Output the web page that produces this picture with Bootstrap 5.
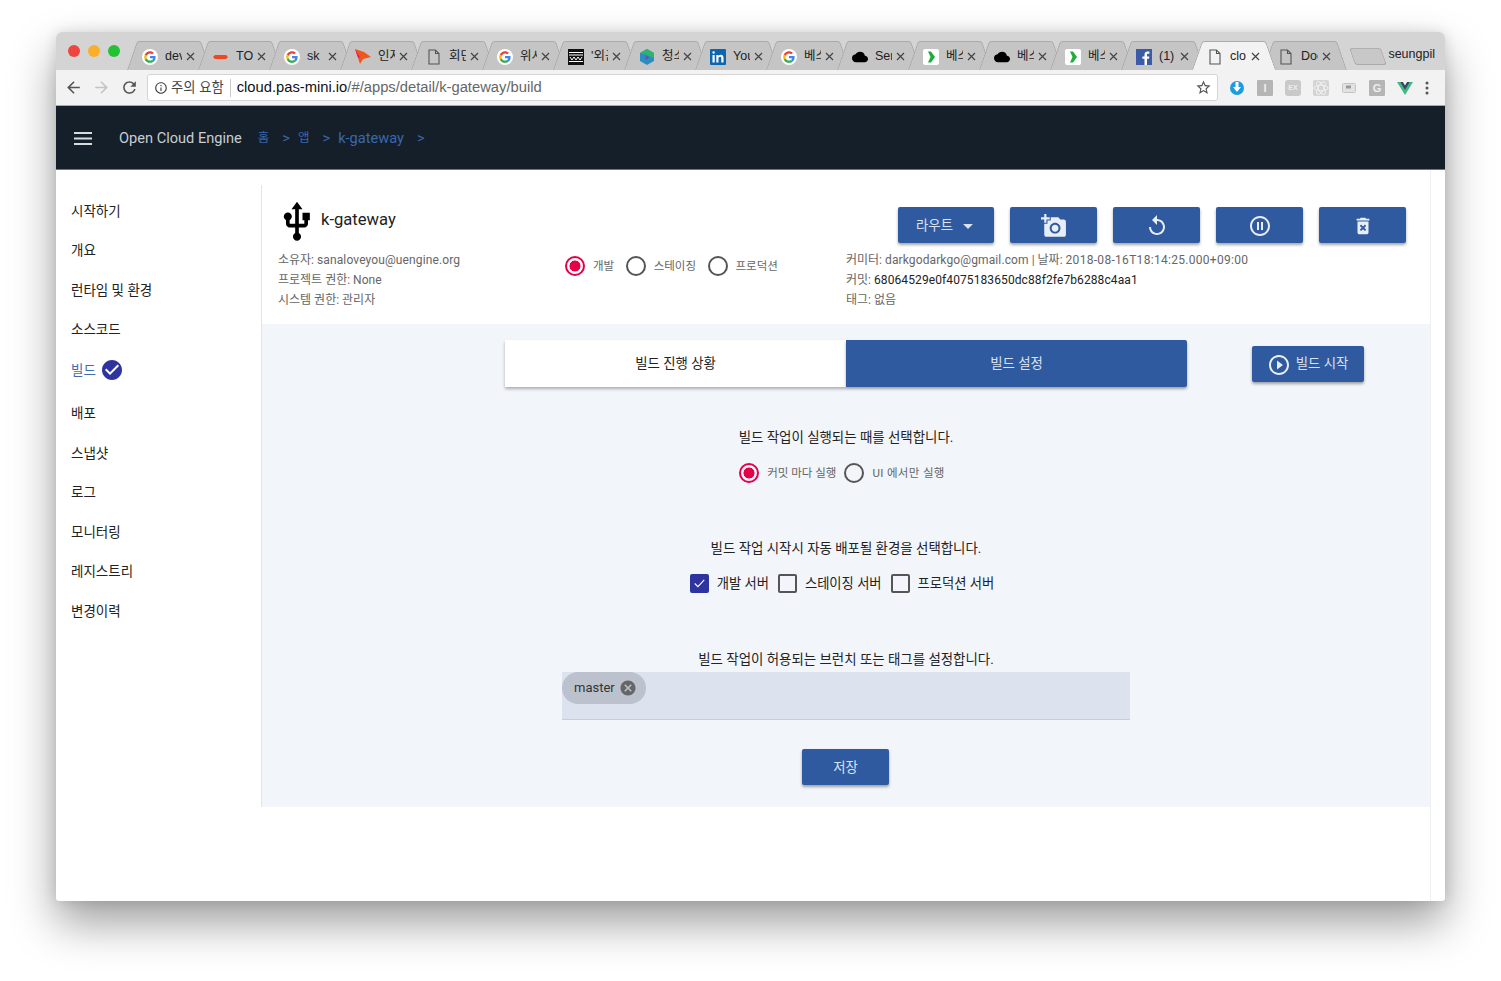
<!DOCTYPE html>
<html lang="ko">
<head>
<meta charset="utf-8">
<title>Open Cloud Engine</title>
<link href="https://cdn.jsdelivr.net/npm/bootstrap@5.3.0/dist/css/bootstrap.min.css" rel="stylesheet">
<style>
html,body{height:100%;}
body{margin:0;background:#fff;font-family:Roboto,"Noto Sans CJK KR",sans-serif;font-size:14px;color:#222;overflow:hidden;}
.oc-stage{padding:32px 56px 0;height:981px;}
.oc-win{width:1389px;height:869px;border-radius:6px 6px 3px 3px;background:#fff;box-shadow:0 22px 45px rgba(0,0,0,.38),0 0 14px rgba(0,0,0,.12);overflow:hidden;display:flex;flex-direction:column;}
.oc-strip{height:38px;background:#d4d4d4;flex:none;position:relative;}
.oc-dots{gap:8px;padding:13px 0 0 12px;width:71px;flex:none;}
.oc-dot{width:12px;height:12px;border-radius:50%;}
.oc-tabs{padding-top:9px;isolation:isolate;}
.oc-tab{width:84px;height:29px;margin-right:-13px;position:relative;display:flex;align-items:center;padding:2px 0 0 15px;font-family:"Liberation Sans","Noto Sans CJK KR",sans-serif;font-size:12.5px;color:#222;flex:none;}
.oc-tab::before,.oc-tab::after{content:"";position:absolute;top:0;bottom:0;width:50%;background:#c5c5c5;border-top:1px solid #aaa;z-index:-1;}
.oc-tab::before{left:5px;transform:skewX(-19deg);border-left:1px solid #a5a5a5;border-top-left-radius:3px;}
.oc-tab::after{right:5px;transform:skewX(19deg);border-right:1px solid #a5a5a5;border-top-right-radius:3px;}
.oc-tab.oc-on{z-index:2;}
.oc-tab.oc-on::before,.oc-tab.oc-on::after{background:#f2f2f2;}
.oc-fav{width:16px;height:16px;flex:none;display:block;}
.oc-tname{width:17px;margin-left:7px;overflow:hidden;white-space:nowrap;flex:none;}
.oc-x{margin-left:4px;width:9px;height:9px;flex:none;}
.oc-newtab{width:32px;height:17px;margin:7px 0 0 18px;flex:none;background:#c8c8c8;border:1px solid #aaa;border-top-color:#b0b0b0;border-radius:3px;transform:skewX(19deg);}
.oc-user{position:absolute;right:10px;top:13px;font-family:"Liberation Sans",sans-serif;font-size:12.5px;color:#222;}
.oc-bar{height:36px;background:#f2f2f2;border-bottom:1px solid #a8a8a8;flex:none;padding:0 0 0 8px;}
.oc-ic{width:19px;height:19px;flex:none;}
.oc-fwd{margin:0 9px;}
.oc-omni{width:1071px;height:27px;margin-left:8px;background:#fff;border:1px solid #d5d5d5;border-radius:3px;padding:0 5px 0 6px;flex:none;font-family:"Liberation Sans","Noto Sans CJK KR",sans-serif;}
.oc-warn{font-size:13.3px;color:#444;margin-left:3px;padding-right:6px;border-right:1px solid #ccc;line-height:18px;white-space:nowrap;}
.oc-url{font-size:14.75px;color:#666;margin-left:6px;white-space:nowrap;}
.oc-url b{font-weight:400;color:#111;}
.oc-exts{gap:12px;margin-left:11px;}
.oc-ext{width:16px;height:16px;flex:none;background:#b5b5b5;color:#eee;font:700 11px/16px "Liberation Sans",sans-serif;text-align:center;border-radius:1px;}
.oc-ext.oc-soft{background:#c9c9c9;border-radius:3px;font-size:7px;}
.oc-top{height:64px;background:#141f29;flex:none;padding:2px 0 0 18px;border-bottom:1px solid #6b7783;}
.oc-brand{margin-left:27px;color:#c8cdd2;font-size:14.6px;white-space:nowrap;}
.oc-crumbs{margin-left:16px;color:#3a67ad;font-size:14.6px;white-space:nowrap;align-items:center;}
.oc-crumbs .oc-ci{margin-right:13px;}
.oc-crumbs .oc-ko{font-size:12.5px;}
.oc-crumbs .oc-sep{margin-right:8px;}
.oc-main{flex:1;min-height:0;display:flex;}
.oc-side{width:205px;flex:none;padding:21px 0 0 15px;color:#222;}
.oc-side a{display:flex;align-items:center;height:39.6px;color:#222;text-decoration:none;font-size:13.5px;}
.oc-side a.oc-act{color:#3f6cb0;height:44px;padding-bottom:2px;}
.oc-cont{width:1169px;flex:none;margin-top:15px;}
.oc-panel{border-left:1px solid #e2e4e8;height:622px;display:flex;flex-direction:column;}
.oc-head{height:139px;background:#fff;flex:none;}
.oc-headtop{height:65px;padding:0 24px 0 16px;}
.oc-idn{height:70px;margin-left:-3px;}
.oc-title{font-size:16.6px;color:#222;margin-left:2px;}
.oc-usb{margin-top:3px;}
.oc-btn{--bs-btn-padding-x:0;--bs-btn-padding-y:0;height:36px;width:87px;background:#305a9f;border:0;border-radius:2px;color:#d8e2f2;font-size:13.4px;box-shadow:0 2px 3px rgba(0,0,0,.35);display:flex;align-items:center;justify-content:center;padding-top:2px;}
.oc-btn:hover{background:#305a9f;color:#d8e2f2;}
.oc-route{width:96px;gap:10px;padding-right:3px;}
.oc-start{width:112px;gap:5px;margin-right:2px;}
.oc-save{margin:29px 1px 0 0;}
.oc-btns{padding-top:22px;}
.oc-info{padding-left:16px;}
.oc-meta{font-size:12px;line-height:20px;color:#666;white-space:nowrap;}
.oc-meta b{font-weight:400;color:#222;letter-spacing:.1px;}
.oc-lat{letter-spacing:.12px;}
.oc-lat2{letter-spacing:.3px;}
.oc-c1{width:287px;flex:none;}
.oc-c2{width:281px;flex:none;padding-top:6px;}
.form-check-input.oc-radio{width:20px;height:20px;margin:0;flex:none;background:transparent;border:2px solid #555;border-radius:50%;box-shadow:none;}
.form-check-input.oc-radio:checked{border-color:#e5004a;background-image:radial-gradient(circle,#e5004a 0,#e5004a 5.2px,transparent 5.8px);background-color:transparent;}
.form-check-input.oc-rgap{margin-left:11.5px;}
.form-check-input.oc-rgap2{margin-left:8px;}
.oc-rl{font-size:11.5px;color:#666;white-space:nowrap;line-height:20px;margin-left:8px;}
.oc-rls{letter-spacing:.35px;}
.oc-body{flex:1;background:#f2f5fa;}
.oc-tabrow{padding-top:16px;}
.oc-seg{width:341px;height:47px;display:flex;align-items:center;justify-content:center;font-size:13.4px;padding-top:2px;}
.oc-seg1{background:#fff;color:#222;box-shadow:0 2px 3px rgba(0,0,0,.3);}
.oc-seg2{background:#305a9f;color:#d8e2f2;box-shadow:0 2px 3px rgba(0,0,0,.35);border-radius:0 2px 2px 0;}
.oc-side-b{flex:1;}
.oc-lab{font-size:13.45px;color:#222;line-height:20px;white-space:nowrap;}
.oc-l1{margin-top:41px;}
.oc-r1{margin-top:15px;padding-right:8px;}
.oc-l2{margin-top:56px;}
.oc-r2{margin-top:15px;padding-right:8px;}
.oc-l3{margin-top:56px;margin-bottom:2px;}
.form-check-input.oc-chk{width:19px;height:19px;margin:0;flex:none;background-color:transparent;border:2px solid #555;border-radius:2px;box-shadow:none;}
.form-check-input.oc-chk:checked{background-color:#2e349f;border-color:#2e349f;background-image:url("data:image/svg+xml,%3Csvg xmlns='http://www.w3.org/2000/svg' viewBox='0 0 19 19'%3E%3Cpath fill='none' stroke='%23fff' stroke-width='1.400' d='M3.500 9.500l4 4 8-8.500'/%3E%3C/svg%3E");background-size:100% 100%;}
.form-check-input.oc-cgap{margin-left:9px;}
.oc-cl{font-size:13.3px;color:#222;white-space:nowrap;margin-left:8px;}
.oc-input{width:568px;height:48px;background:#dce3ef;border-bottom:1px solid #c5ccdc;}
.oc-chip{height:32px;width:84px;border-radius:16px;background:#bcc2cd;padding-left:12px;font-size:13px;color:#333;}
.oc-chipx{margin-right:9px;}
.oc-bar-r{width:15px;flex:none;border-left:1px solid #efefef;}
</style>
</head>
<body>
<svg width="0" height="0" class="d-none" aria-hidden="true">
  <symbol id="g" viewBox="0 0 48 48"><circle cx="24" cy="24" r="24" fill="#fff"/><g transform="translate(6.500 6.500) scale(.73)"><path fill="#EA4335" d="M24 9.500c3.500 0 6.700 1.200 9.200 3.600l6.900-6.900C35.900 2.400 30.500 0 24 0 14.600 0 6.500 5.400 2.600 13.200l8 6.200C12.400 13.700 17.700 9.500 24 9.500z"/><path fill="#4285F4" d="M47 24.500c0-1.600-.1-3.100-.4-4.500H24v9h12.900c-.6 3-2.200 5.500-4.700 7.200l7.700 6C44.400 37.900 47 31.800 47 24.500z"/><path fill="#FBBC05" d="M10.500 28.600c-.5-1.400-.8-3-.8-4.600s.3-3.200.8-4.600l-8-6.200C.9 16.500 0 20.100 0 24s.9 7.500 2.600 10.800l7.900-6.200z"/><path fill="#34A853" d="M24 48c6.500 0 11.900-2.100 15.900-5.800l-7.700-6c-2.200 1.400-4.900 2.300-8.200 2.300-6.300 0-11.600-4.200-13.500-9.900l-8 6.200C6.500 42.600 14.600 48 24 48z"/></g></symbol>
  <symbol id="doc" viewBox="0 0 16 16"><path fill="none" stroke="#555" stroke-width="1.100" d="M3 1h6.500L13 4.500V15H3zM9.500 1v3.500H13"/></symbol>
  <symbol id="cloud" viewBox="0 0 24 24"><path fill="#000" d="M19.350 10.040A7.490 7.490 0 0 0 12 4C9.110 4 6.600 5.640 5.350 8.040A5.994 5.994 0 0 0 0 14c0 3.310 2.690 6 6 6h13c2.760 0 5-2.240 5-5 0-2.640-2.050-4.780-4.650-4.960z"/></symbol>
  <symbol id="ch" viewBox="0 0 16 16"><rect width="16" height="16" rx="2" fill="#fff"/><path fill="#1fae3c" d="M5 2.500h3l4 5.500-4 5.500H5l2.500-5.500z"/></symbol>
  <symbol id="xx" viewBox="0 0 9 9"><path stroke="#444" stroke-width="1.200" d="M1 1l7 7M8 1L1 8"/></symbol>
</svg>
<div class="oc-stage">
<div class="oc-win">
  <div class="oc-strip d-flex">
    <div class="oc-dots d-flex"><span class="oc-dot" style="background:#f0443e"></span><span class="oc-dot" style="background:#fbae27"></span><span class="oc-dot" style="background:#25c135"></span></div>
    <div class="oc-tabs d-flex">
      <div class="oc-tab"><svg class="oc-fav"><use href="#g"/></svg><span class="oc-tname">dev</span><svg class="oc-x"><use href="#xx"/></svg></div>
      <div class="oc-tab"><svg class="oc-fav" viewBox="0 0 16 16"><path fill="#f0451e" d="M2 6h11l2 2-2 2H2L0 8z"/></svg><span class="oc-tname">TO</span><svg class="oc-x"><use href="#xx"/></svg></div>
      <div class="oc-tab"><svg class="oc-fav"><use href="#g"/></svg><span class="oc-tname">sk</span><svg class="oc-x"><use href="#xx"/></svg></div>
      <div class="oc-tab"><svg class="oc-fav" viewBox="0 0 16 16"><path fill="#f0561e" d="M0 0l9 3 7 5-8 2-3 5-2-6z"/><path fill="#e6007e" d="M0 0l5 9-2-1z"/></svg><span class="oc-tname">인지</span><svg class="oc-x"><use href="#xx"/></svg></div>
      <div class="oc-tab"><svg class="oc-fav"><use href="#doc"/></svg><span class="oc-tname">회단</span><svg class="oc-x"><use href="#xx"/></svg></div>
      <div class="oc-tab"><svg class="oc-fav"><use href="#g"/></svg><span class="oc-tname">위시</span><svg class="oc-x"><use href="#xx"/></svg></div>
      <div class="oc-tab"><svg class="oc-fav" viewBox="0 0 16 16"><rect width="16" height="16" fill="#111"/><path stroke="#fff" stroke-width="1" fill="none" d="M1 3.500h14M1 6h14M2 8l2 3 2-3 2 3 2-3 2 3 2-3M1 12.500h14"/></svg><span class="oc-tname">'외근</span><svg class="oc-x"><use href="#xx"/></svg></div>
      <div class="oc-tab"><svg class="oc-fav" viewBox="0 0 16 16"><path fill="#2a8fc0" d="M8 0l7 4v8l-7 4-7-4V4z"/><path fill="#2eb56b" d="M8 0l7 4v5L8 6 1 4z"/><path fill="#6a4fb0" d="M6.500 6l4 2.500-4 2.500z"/></svg><span class="oc-tname">청소</span><svg class="oc-x"><use href="#xx"/></svg></div>
      <div class="oc-tab"><svg class="oc-fav" viewBox="0 0 16 16"><rect width="16" height="16" rx="1" fill="#0a66b0"/><path fill="#fff" d="M2.500 6h2.200v7.500H2.500zM2.400 3.500a1.200 1.200 0 1 1 2.400 0 1.200 1.200 0 0 1-2.400 0zM6.300 6h2.100v1c.5-.8 1.300-1.200 2.300-1.200 2 0 2.800 1.200 2.800 3.200v4.500h-2.200V9.500c0-1-.3-1.700-1.200-1.700-1 0-1.600.7-1.600 1.800v3.900H6.300z"/></svg><span class="oc-tname">You</span><svg class="oc-x"><use href="#xx"/></svg></div>
      <div class="oc-tab"><svg class="oc-fav"><use href="#g"/></svg><span class="oc-tname">베스</span><svg class="oc-x"><use href="#xx"/></svg></div>
      <div class="oc-tab"><svg class="oc-fav"><use href="#cloud"/></svg><span class="oc-tname">Ser</span><svg class="oc-x"><use href="#xx"/></svg></div>
      <div class="oc-tab"><svg class="oc-fav"><use href="#ch"/></svg><span class="oc-tname">베스</span><svg class="oc-x"><use href="#xx"/></svg></div>
      <div class="oc-tab"><svg class="oc-fav"><use href="#cloud"/></svg><span class="oc-tname">베스</span><svg class="oc-x"><use href="#xx"/></svg></div>
      <div class="oc-tab"><svg class="oc-fav"><use href="#ch"/></svg><span class="oc-tname">베스</span><svg class="oc-x"><use href="#xx"/></svg></div>
      <div class="oc-tab"><svg class="oc-fav" viewBox="0 0 16 16"><rect width="16" height="16" fill="#3b5aa8"/><path fill="#fff" d="M11 16V9.800h2l.3-2.400H11V5.900c0-.7.2-1.200 1.200-1.200h1.200V2.600c-.2 0-1-.1-1.800-.1-1.900 0-3.100 1.100-3.100 3.200v1.700H6.400v2.400h2.100V16z"/></svg><span class="oc-tname">(1)</span><svg class="oc-x"><use href="#xx"/></svg></div>
      <div class="oc-tab oc-on"><svg class="oc-fav"><use href="#doc"/></svg><span class="oc-tname">clo</span><svg class="oc-x"><use href="#xx"/></svg></div>
      <div class="oc-tab"><svg class="oc-fav"><use href="#doc"/></svg><span class="oc-tname">Doc</span><svg class="oc-x"><use href="#xx"/></svg></div>
      <div class="oc-newtab"></div>
    </div>
    <div class="oc-user">seungpil</div>
  </div>
  <div class="oc-bar d-flex align-items-center">
    <svg class="oc-ic" viewBox="0 0 24 24"><path fill="#555" d="M20 11H7.830l5.590-5.590L12 4l-8 8 8 8 1.410-1.410L7.830 13H20v-2z"/></svg>
    <svg class="oc-ic oc-fwd" viewBox="0 0 24 24"><path fill="#c4c4c4" d="M12 4l-1.410 1.410L16.170 11H4v2h12.170l-5.580 5.590L12 20l8-8z"/></svg>
    <svg class="oc-ic" viewBox="0 0 24 24"><path fill="#555" d="M17.650 6.350A7.958 7.958 0 0 0 12 4c-4.420 0-7.990 3.580-7.990 8s3.570 8 7.990 8c3.730 0 6.840-2.550 7.730-6h-2.080A5.990 5.990 0 0 1 12 18c-3.310 0-6-2.690-6-6s2.690-6 6-6c1.660 0 3.140.69 4.220 1.780L13 11h7V4l-2.350 2.350z"/></svg>
    <div class="oc-omni d-flex align-items-center">
      <svg width="14" height="14" viewBox="0 0 24 24"><path fill="#444" d="M11 17h2v-6h-2v6zm1-15C6.480 2 2 6.480 2 12s4.480 10 10 10 10-4.480 10-10S17.520 2 12 2zm0 18c-4.410 0-8-3.590-8-8s3.590-8 8-8 8 3.590 8 8-3.590 8-8 8zm-1-11h2V7h-2v2z"/></svg>
      <span class="oc-warn">주의 요함</span>
      <span class="oc-url"><b>cloud.pas-mini.io</b>/#/apps/detail/k-gateway/build</span>
      <svg class="ms-auto" width="17" height="17" viewBox="0 0 24 24"><path fill="#555" d="M22 9.240l-7.190-.62L12 2 9.190 8.630 2 9.240l5.460 4.730L5.820 21 12 17.270 18.180 21l-1.630-7.030L22 9.240zM12 15.400l-3.760 2.270 1-4.280-3.320-2.880 4.380-.38L12 6.100l1.710 4.040 4.380.38-3.320 2.880 1 4.280L12 15.400z"/></svg>
    </div>
    <div class="oc-exts d-flex align-items-center">
      <svg width="16" height="16" viewBox="0 0 16 16"><circle cx="8" cy="8" r="7" fill="#1d9be0"/><path fill="#fff" d="M6.500 2h3v5h2.500L8 12 4 7h2.500z"/></svg>
      <span class="oc-ext">I</span>
      <span class="oc-ext oc-soft">EX</span>
      <svg width="16" height="16" viewBox="0 0 16 16"><rect width="16" height="16" rx="2" fill="#d4d4d4"/><g fill="none" stroke="#f2f2f2" stroke-width=".9"><ellipse cx="8" cy="8" rx="7" ry="2.800"/><ellipse cx="8" cy="8" rx="7" ry="2.800" transform="rotate(60 8 8)"/><ellipse cx="8" cy="8" rx="7" ry="2.800" transform="rotate(120 8 8)"/></g></svg>
      <svg width="16" height="16" viewBox="0 0 16 16"><rect x="1.500" y="3.500" width="13" height="9" rx="1" fill="#e2e2e2" stroke="#c4c4c4"/><rect x="5" y="5.500" width="5" height="3" fill="#999"/></svg>
      <span class="oc-ext">G</span>
      <svg width="16" height="16" viewBox="0 0 16 16"><path fill="#41b883" d="M0 2h3.500L8 9.500 12.500 2H16L8 15z"/><path fill="#34495e" d="M3.200 2h2.700L8 5.500 10.100 2h2.700L8 10z"/></svg>
      <svg width="4" height="14" viewBox="0 0 4 14"><circle cx="2" cy="2" r="1.500" fill="#555"/><circle cx="2" cy="7" r="1.500" fill="#555"/><circle cx="2" cy="12" r="1.500" fill="#555"/></svg>
    </div>
  </div>
  <div class="oc-top d-flex align-items-center">
    <svg width="18" height="13" viewBox="0 0 18 13"><path fill="#d8dbde" d="M0 0h18v2H0zM0 5.500h18v2H0zM0 11h18v2H0z"/></svg>
    <span class="oc-brand">Open Cloud Engine</span>
    <div class="oc-crumbs d-flex"><span class="oc-ci oc-ko">홈</span><span class="oc-sep">&gt;</span><span class="oc-ci oc-ko">앱</span><span class="oc-sep">&gt;</span><span class="oc-ci">k-gateway</span><span>&gt;</span></div>
  </div>
  <div class="oc-main">
    <nav class="oc-side">
      <a href="#">시작하기</a><a href="#">개요</a><a href="#">런타임 및 환경</a><a href="#">소스코드</a>
      <a href="#" class="oc-act">빌드<svg class="ms-1" width="24" height="24" viewBox="0 0 24 24"><circle cx="12" cy="12" r="6" fill="#fff"/><path fill="#2e349f" d="M12 2C6.480 2 2 6.480 2 12s4.480 10 10 10 10-4.480 10-10S17.520 2 12 2zm-2 15l-5-5 1.410-1.410L10 14.170l7.590-7.590L19 8l-9 9z"/></svg></a>
      <a href="#">배포</a><a href="#">스냅샷</a><a href="#">로그</a><a href="#">모니터링</a><a href="#">레지스트리</a><a href="#">변경이력</a>
    </nav>
    <div class="oc-cont">
      <div class="oc-panel">
        <section class="oc-head">
          <div class="oc-headtop d-flex justify-content-between">
            <div class="oc-idn d-flex align-items-center">
              <svg class="oc-usb" width="44" height="44" viewBox="0 0 24 24"><path fill="#000" d="M15 7v4h1v2h-3V5h2l-3-4-3 4h2v8H8v-2.070c.7-.37 1.200-1.080 1.200-1.930 0-1.210-.99-2.200-2.200-2.200-1.210 0-2.200.99-2.200 2.200 0 .85.5 1.560 1.200 1.930V13c0 1.110.89 2 2 2h3v3.050c-.71.37-1.200 1.100-1.200 1.950 0 1.220.99 2.200 2.200 2.200 1.210 0 2.200-.98 2.200-2.200 0-.85-.49-1.580-1.200-1.950V15h3c1.110 0 2-.89 2-2v-2h1V7h-4z"/></svg>
              <span class="oc-title">k-gateway</span>
            </div>
            <div class="oc-btns d-flex gap-3">
              <button class="btn oc-btn oc-route" type="button">라우트<svg width="10" height="5" viewBox="0 0 10 5"><path fill="#d8e2f2" d="M0 0h10L5 5z"/></svg></button>
              <button class="btn oc-btn" type="button" aria-label="스냅샷"><svg width="26" height="26" viewBox="0 0 24 24"><path fill="#e8eef8" d="M3 4V1h2v3h3v2H5v3H3V6H0V4h3zm3 6V7h3V4h7l1.830 2H21c1.100 0 2 .9 2 2v12c0 1.100-.9 2-2 2H5c-1.100 0-2-.9-2-2V10h3zm7 9c2.760 0 5-2.240 5-5s-2.240-5-5-5-5 2.240-5 5 2.240 5 5 5zm-3.200-5c0 1.770 1.430 3.200 3.200 3.200s3.200-1.430 3.200-3.200-1.430-3.200-3.200-3.200-3.200 1.430-3.200 3.200z"/></svg></button>
              <button class="btn oc-btn" type="button" aria-label="재시작"><svg width="24" height="24" viewBox="0 0 24 24"><path fill="#e8eef8" d="M12 5V1L7 6l5 5V7c3.310 0 6 2.690 6 6s-2.690 6-6 6-6-2.690-6-6H4c0 4.420 3.580 8 8 8s8-3.580 8-8-3.580-8-8-8z"/></svg></button>
              <button class="btn oc-btn" type="button" aria-label="일시정지"><svg width="24" height="24" viewBox="0 0 24 24"><path fill="#e8eef8" d="M9 16h2V8H9v8zm3-14C6.480 2 2 6.480 2 12s4.480 10 10 10 10-4.480 10-10S17.520 2 12 2zm0 18c-4.410 0-8-3.590-8-8s3.590-8 8-8 8 3.590 8 8-3.590 8-8 8zm1-4h2V8h-2v8z"/></svg></button>
              <button class="btn oc-btn" type="button" aria-label="삭제"><svg width="22" height="22" viewBox="0 0 24 24"><path fill="#e8eef8" d="M6 19c0 1.100.9 2 2 2h8c1.100 0 2-.9 2-2V7H6v12zm2.460-7.120l1.410-1.410L12 12.590l2.120-2.120 1.410 1.410L13.410 14l2.120 2.120-1.410 1.410L12 15.410l-2.120 2.120-1.410-1.410L10.590 14l-2.130-2.120zM15.500 4l-1-1h-5l-1 1H5v2h14V4z"/></svg></button>
            </div>
          </div>
          <div class="oc-info d-flex">
            <div class="oc-c1 oc-meta"><div>소유자: <span class="oc-lat">sanaloveyou@uengine.org</span></div><div>프로젝트 권한: None</div><div>시스템 권한: 관리자</div></div>
            <div class="oc-c2 d-flex align-items-start">
              <input class="form-check-input oc-radio" type="radio" name="env" checked aria-label="개발"><span class="oc-rl">개발</span>
              <input class="form-check-input oc-radio oc-rgap" type="radio" name="env" aria-label="스테이징"><span class="oc-rl">스테이징</span>
              <input class="form-check-input oc-radio oc-rgap" type="radio" name="env" aria-label="프로덕션"><span class="oc-rl">프로덕션</span>
            </div>
            <div class="oc-meta"><div>커미터: <span class="oc-lat">darkgodarkgo@gmail.com</span> | 날짜: <span class="oc-lat2">2018-08-16T18:14:25.000+09:00</span></div><div>커밋: <b>68064529e0f4075183650dc88f2fe7b6288c4aa1</b></div><div>태그: 없음</div></div>
          </div>
        </section>
        <section class="oc-body">
          <div class="oc-tabrow d-flex align-items-center">
            <div class="oc-side-b"></div>
            <div class="d-flex">
              <div class="oc-seg oc-seg1">빌드 진행 상황</div>
              <div class="oc-seg oc-seg2">빌드 설정</div>
            </div>
            <div class="oc-side-b d-flex justify-content-center">
              <button class="btn oc-btn oc-start" type="button"><svg width="24" height="24" viewBox="0 0 24 24"><path fill="#e8eef8" d="M10 16.500l6-4.500-6-4.500v9zM12 2C6.480 2 2 6.480 2 12s4.480 10 10 10 10-4.480 10-10S17.520 2 12 2zm0 18c-4.410 0-8-3.590-8-8s3.590-8 8-8 8 3.590 8 8-3.590 8-8 8z"/></svg>빌드 시작</button>
            </div>
          </div>
          <div class="d-flex flex-column align-items-center">
            <div class="oc-lab oc-l1">빌드 작업이 실행되는 때를 선택합니다.</div>
            <div class="oc-r1 d-flex align-items-center">
              <input class="form-check-input oc-radio" type="radio" name="when" checked aria-label="커밋 마다 실행"><span class="oc-rl">커밋 마다 실행</span>
              <input class="form-check-input oc-radio oc-rgap2" type="radio" name="when" aria-label="UI 에서만 실행"><span class="oc-rl oc-rls">UI 에서만 실행</span>
            </div>
            <div class="oc-lab oc-l2">빌드 작업 시작시 자동 배포될 환경을 선택합니다.</div>
            <div class="oc-r2 d-flex align-items-center">
              <input class="form-check-input oc-chk" type="checkbox" checked aria-label="개발 서버"><span class="oc-cl">개발 서버</span>
              <input class="form-check-input oc-chk oc-cgap" type="checkbox" aria-label="스테이징 서버"><span class="oc-cl">스테이징 서버</span>
              <input class="form-check-input oc-chk oc-cgap" type="checkbox" aria-label="프로덕션 서버"><span class="oc-cl">프로덕션 서버</span>
            </div>
            <div class="oc-lab oc-l3">빌드 작업이 허용되는 브런치 또는 태그를 설정합니다.</div>
            <div class="oc-input">
              <div class="oc-chip d-flex align-items-center">master<svg class="oc-chipx ms-auto" width="18" height="18" viewBox="0 0 24 24"><path fill="#666" d="M12 2C6.470 2 2 6.470 2 12s4.470 10 10 10 10-4.470 10-10S17.530 2 12 2zm5 13.590L15.590 17 12 13.410 8.410 17 7 15.590 10.590 12 7 8.410 8.410 7 12 10.590 15.590 7 17 8.410 13.410 12 17 15.590z"/></svg></div>
            </div>
            <button class="btn oc-btn oc-save" type="button">저장</button>
          </div>
        </section>
      </div>
    </div>
    <div class="oc-bar-r"></div>
  </div>
</div>
</div>
<script src="https://cdn.jsdelivr.net/npm/bootstrap@5.3.0/dist/js/bootstrap.bundle.min.js"></script>
</body>
</html>
